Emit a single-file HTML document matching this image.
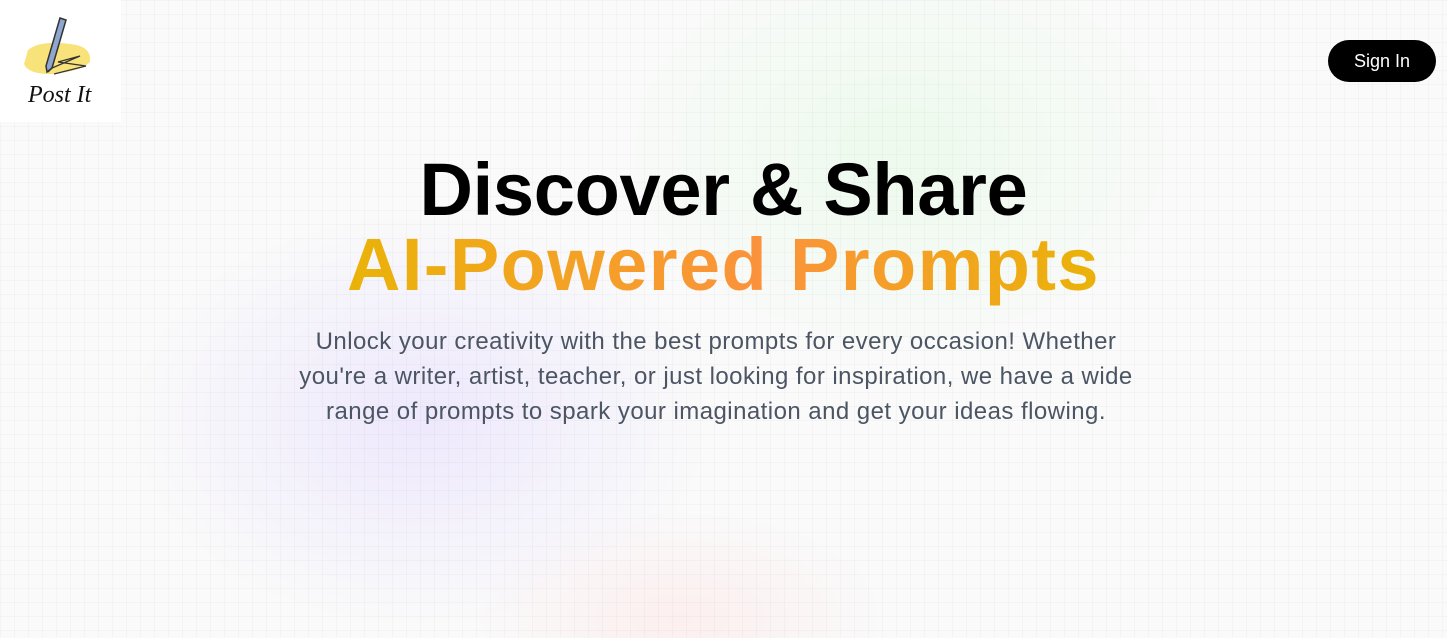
<!DOCTYPE html>
<html><head><meta charset="utf-8"><style>
html,body{margin:0;padding:0}
body{width:1447px;height:638px;overflow:hidden;position:relative;font-family:"Liberation Sans",sans-serif;
background:#fafafa;}
.bg{position:absolute;inset:0;
background:
radial-gradient(ellipse 420px 300px at 420px 420px, rgba(225,215,255,.5), transparent 70%),
radial-gradient(ellipse 420px 300px at 900px 150px, rgba(220,250,220,.45), transparent 70%),
radial-gradient(ellipse 300px 160px at 680px 620px, rgba(255,225,225,.45), transparent 70%);
}
.grid{position:absolute;inset:0;background-image:linear-gradient(rgba(0,0,0,.022) 1px,transparent 1px),linear-gradient(90deg,rgba(0,0,0,.022) 1px,transparent 1px);background-size:14px 14px}
.logo{position:absolute;left:0;top:0;width:121px;height:122px;background:#fff}
.btn{position:absolute;left:1328px;top:40px;width:108px;height:42px;border-radius:21px;background:#000;color:#fff;font-size:18px;line-height:42px;text-align:center}
h1{position:absolute;top:152px;left:0;width:1447px;margin:0;text-align:center;font-size:74px;line-height:75px;font-weight:bold;color:#000}
.l1{letter-spacing:-0.3px}
.g{letter-spacing:1.4px;background:linear-gradient(90deg,#eab308,#fb923c 55%,#eab308);-webkit-background-clip:text;background-clip:text;color:transparent}
p{position:absolute;top:324px;left:281px;width:870px;margin:0;text-align:center;font-size:24px;line-height:35px;color:#4b5563;letter-spacing:0.45px}
</style></head><body>
<div class="bg"></div><div class="grid"></div>
<div class="logo"><svg width="121" height="122" viewBox="0 0 121 122">
<path d="M28 50 Q40 40 70 44 Q92 46 90 62 Q80 72 50 74 Q28 74 24 64 Z" fill="#f8e27a"/>
<path d="M60 18 L66 20 L52 68 L47 72 L46 66 Z" fill="#8fa7cf" stroke="#333" stroke-width="1.5"/>
<path d="M48 72 L52 68 L80 56 L58 62 L86 66 L54 74" fill="none" stroke="#333" stroke-width="1.3"/>
<text x="28" y="102" font-family="Liberation Serif,serif" font-style="italic" font-size="24" fill="#111">Post It</text>
</svg></div>
<div class="btn">Sign In</div>
<h1><span class="l1">Discover &amp; Share</span><br><span class="g">AI-Powered Prompts</span></h1>
<p>Unlock your creativity with the best prompts for every occasion! Whether you're a writer, artist, teacher, or just looking for inspiration, we have a wide range of prompts to spark your imagination and get your ideas flowing.</p>
</body></html>
